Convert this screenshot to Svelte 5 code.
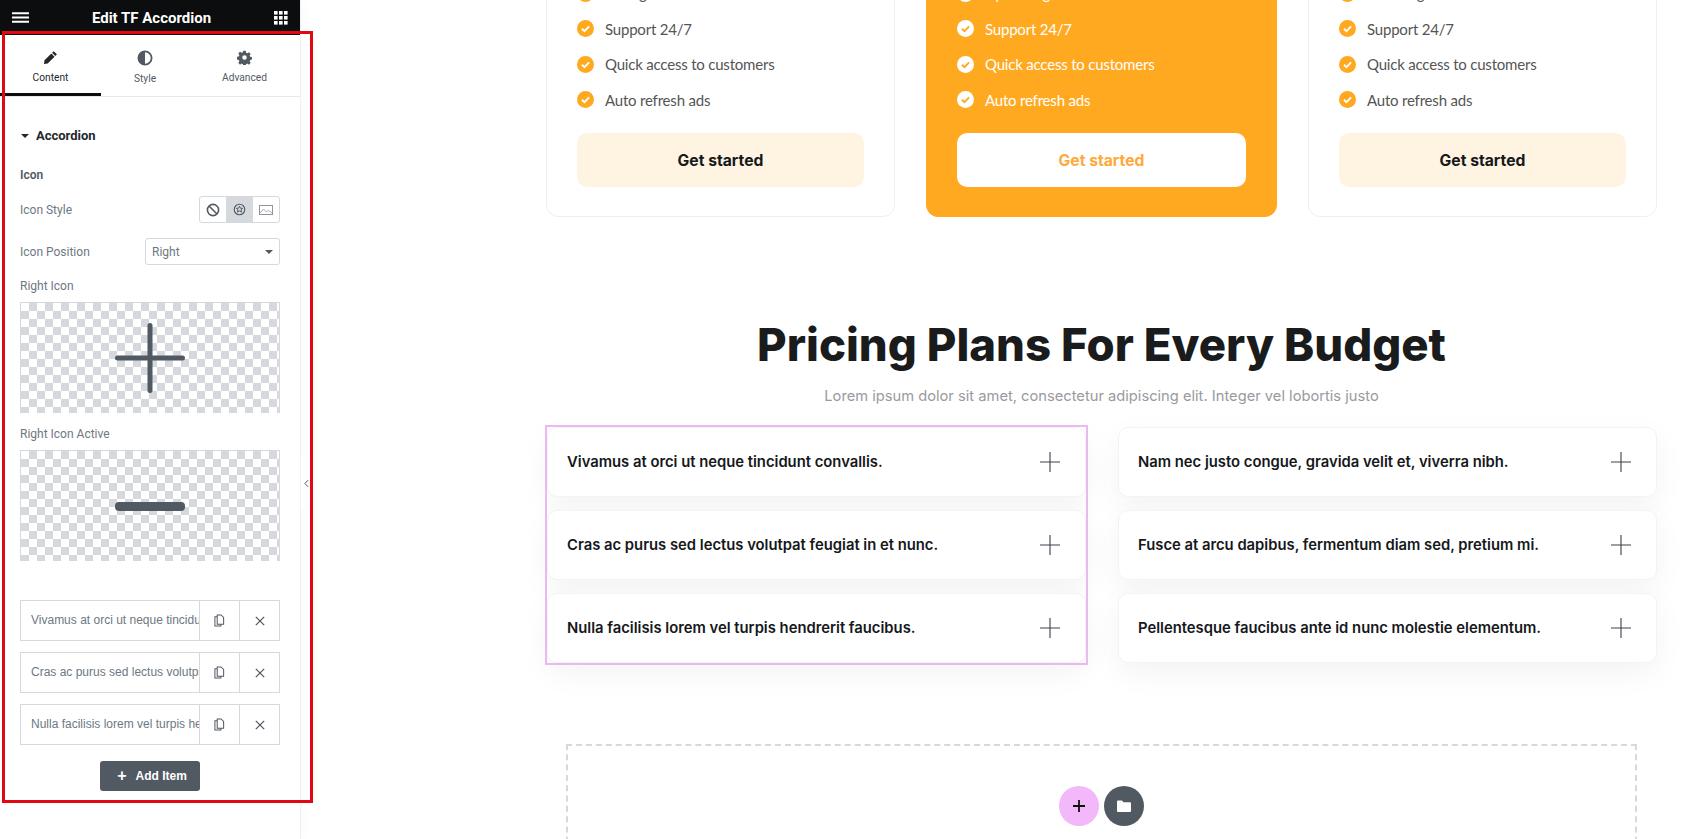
<script lang="ts">
  const plans = [
    { first: 'Listing', featured: false },
    { first: 'Uploading', featured: true },
    { first: 'Branding', featured: false }
  ];
  const features = ['Support 24/7', 'Quick access to customers', 'Auto refresh ads'];
  const leftItems = [
    'Vivamus at orci ut neque tincidunt convallis.',
    'Cras ac purus sed lectus volutpat feugiat in et nunc.',
    'Nulla facilisis lorem vel turpis hendrerit faucibus.'
  ];
  const rightItems = [
    'Nam nec justo congue, gravida velit et, viverra nibh.',
    'Fusce at arcu dapibus, fermentum diam sed, pretium mi.',
    'Pellentesque faucibus ante id nunc molestie elementum.'
  ];
</script>

<div class="page">
  <aside class="panel">
    <header class="panel-head">
      <svg class="burger" viewBox="0 0 16 10" width="17" height="11"><path d="M0 1h16M0 5h16M0 9h16" stroke="#fff" stroke-width="1.8" /></svg>
      <span class="panel-title">Edit TF Accordion</span>
      <svg class="apps" viewBox="0 0 14 14" width="14" height="14" fill="#fff">
        {#each [0, 5, 10] as y}
          {#each [0, 5, 10] as x}
            <rect {x} {y} width="3.6" height="3.6" />
          {/each}
        {/each}
      </svg>
    </header>

    <nav class="tabs">
      <div class="tab active">
        <svg viewBox="0 0 16 16" width="15" height="15"><path d="M11.4 1.2l3.4 3.4-1.7 1.7-3.4-3.4zM8.9 3.7l3.4 3.4-7.3 7.3-4 .6.6-4z" fill="#23282d" /></svg>
        <span>Content</span>
      </div>
      <div class="tab">
        <svg viewBox="0 0 16 16" width="16" height="16"><circle cx="8" cy="8" r="6.6" fill="none" stroke="#515962" stroke-width="1.8" /><path d="M8 1.4a6.6 6.6 0 0 0 0 13.2z" fill="#515962" /></svg>
        <span>Style</span>
      </div>
      <div class="tab">
        <svg viewBox="0 0 16 16" width="15" height="15"><path fill="#515962" fill-rule="evenodd" d="M6.7 1h2.6l.4 2 1.3.6 1.8-1.1 1.8 1.9-1.1 1.7.6 1.4 2 .4v2.5l-2 .4-.6 1.4 1.1 1.7-1.8 1.9-1.8-1.1-1.3.6-.4 2H6.7l-.4-2-1.3-.6-1.8 1.1-1.8-1.9 1.1-1.7-.6-1.4-2-.4V7.5l2-.4.6-1.4-1.1-1.7 1.8-1.9 1.8 1.1 1.3-.6zM8 5.8a2.4 2.4 0 1 0 0 4.8 2.4 2.4 0 0 0 0-4.8z" transform="translate(0 -.2)" /></svg>
        <span>Advanced</span>
      </div>
    </nav>

    <div class="controls">
      <div class="section-title"><i class="caret-dark"></i>Accordion</div>
      <div class="group-title">Icon</div>

      <div class="control-row first">
        <span>Icon Style</span>
        <div class="choices">
          <div class="choice">
            <svg viewBox="0 0 14 14" width="14" height="14"><circle cx="7" cy="7" r="5.6" fill="none" stroke="#515962" stroke-width="1.6" /><path d="M3 3l8 8" stroke="#515962" stroke-width="1.6" /></svg>
          </div>
          <div class="choice on">
            <svg viewBox="0 0 14 14" width="13" height="13"><circle cx="7" cy="7" r="5.7" fill="none" stroke="#515962" stroke-width="1.2" /><path d="M7 3.4l1 2.2 2.4.2-1.8 1.6.6 2.4L7 8.5 4.8 9.8l.6-2.4-1.8-1.6L6 5.6z" fill="none" stroke="#515962" /></svg>
          </div>
          <div class="choice">
            <svg viewBox="0 0 14 12" width="14" height="12"><rect x=".5" y="1.5" width="13" height="9" fill="none" stroke="#8f959c" /><path d="M1 9l3.5-4 3 3 2-1.6L13 9" fill="none" stroke="#8f959c" stroke-width=".8" /></svg>
          </div>
        </div>
      </div>

      <div class="control-row second">
        <span>Icon Position</span>
        <div class="select">Right<i class="caret-gray"></i></div>
      </div>

      <div class="media-label">Right Icon</div>
      <div class="media">
        <svg viewBox="0 0 70 70" width="70" height="70"><path d="M2.5 35h65M35 2.5v65" stroke="#515962" stroke-width="5" stroke-linecap="round" /></svg>
      </div>

      <div class="media-label">Right Icon Active</div>
      <div class="media">
        <svg viewBox="0 0 70 9" width="70" height="9"><rect width="70" height="9" rx="4" fill="#515962" /></svg>
      </div>

      <div class="repeater">
        {#each leftItems as item}
          <div class="rep-row">
            <div class="rep-title">{item}</div>
            <div class="rep-btn">
              <svg viewBox="0 0 12 14" width="11" height="13" fill="none" stroke="#515962" stroke-width="1.1"><path d="M3.5 3H1v10h6.5v-2M3.5 1h4.2L10.5 3.600V11h-7z" /></svg>
            </div>
            <div class="rep-btn">
              <svg viewBox="0 0 12 12" width="10" height="10"><path d="M1 1l10 10M11 1L1 11" stroke="#515962" stroke-width="1.5" /></svg>
            </div>
          </div>
        {/each}
      </div>

      <div class="add-item"><span class="add-plus">+</span>Add Item</div>
    </div>
  </aside>

  <div class="collapse-tab">
    <svg viewBox="0 0 6 10" width="5" height="9"><path d="M5 1L1 5l4 4" fill="none" stroke="#515962" stroke-width="1.2" /></svg>
  </div>
  <div class="red-frame"></div>

  <main class="canvas">
    <section class="plans">
      {#each plans as plan}
        <article class="plan" class:featured={plan.featured}>
          <ul>
            {#each [plan.first, ...features] as text}
              <li>
                <svg viewBox="0 0 18 18" width="17" height="17">
                  <circle cx="9" cy="9" r="9" class="disc" />
                  <path d="M5.2 9.3l2.7 2.6 4.900-5.200" fill="none" class="tick" stroke-width="2" />
                </svg>
                {text}
              </li>
            {/each}
          </ul>
          <div class="get-started">Get started</div>
        </article>
      {/each}
    </section>

    <section class="heading">
      <h2>Pricing Plans For Every Budget</h2>
      <p>Lorem ipsum dolor sit amet, consectetur adipiscing elit. Integer vel lobortis justo</p>
    </section>

    <section class="faq">
      <div class="faq-col selected">
        {#each leftItems as item}
          <div class="faq-item">
            <span>{item}</span>
            <svg viewBox="0 0 20 20" width="20" height="20"><path d="M0 10h20M10 0v20" stroke="#3a4148" stroke-width="1.1" /></svg>
          </div>
        {/each}
      </div>
      <div class="faq-col">
        {#each rightItems as item}
          <div class="faq-item">
            <span>{item}</span>
            <svg viewBox="0 0 20 20" width="20" height="20"><path d="M0 10h20M10 0v20" stroke="#3a4148" stroke-width="1.1" /></svg>
          </div>
        {/each}
      </div>
    </section>

    <section class="dropzone">
      <div class="round pink">
        <svg viewBox="0 0 12 12" width="12" height="12"><path d="M6 0v12M0 6h12" stroke="#111" stroke-width="1.8" /></svg>
      </div>
      <div class="round slate">
        <svg viewBox="0 0 14 12" width="14" height="12"><path d="M0 1.5A1 1 0 0 1 1 .5h4l1.5 1.700H13a1 1 0 0 1 1 1V11a1 1 0 0 1-1 1H1a1 1 0 0 1-1-1z" fill="#fff" /></svg>
      </div>
    </section>
  </main>
</div>

<style>
  :global(body) {
    margin: 0;
    background: #fff;
  }

  .page {
    position: relative;
    display: flex;
    height: 839px;
    overflow: hidden;
    font-family: Roboto, "Liberation Sans", sans-serif;
  }

  /* side panel */
  .panel {
    width: 300px;
    flex: none;
    background: #fff;
    box-shadow: 1px 0 0 #f1f2f3, 4px 0 8px rgba(0, 0, 0, 0.02);
    box-sizing: border-box;
    color: #6d7882;
  }

  .panel-head {
    height: 35px;
    background: #0c0d0e;
    display: flex;
    align-items: center;
    justify-content: space-between;
    padding: 0 12px;
  }

  .panel-title {
    color: #fff;
    font-weight: 700;
    font-size: 15px;
  }

  .tabs {
    display: flex;
    height: 61px;
    border-bottom: 1px solid #e6e8ea;
    color: #515962;
  }

  .tab {
    width: 88px;
    display: flex;
    flex-direction: column;
    align-items: center;
    padding-top: 15px;
    box-sizing: border-box;
    font-size: 10.2px;
    gap: 7px;
  }

  .tab:last-child {
    width: 111px;
  }

  .tab.active {
    width: 101px;
    color: #23282d;
    border-bottom: 3px solid #0c0d0e;
    height: 61px;
  }

  .controls {
    padding: 0 20px;
  }

  .section-title {
    margin-top: 31px;
    display: flex;
    align-items: center;
    font-weight: 700;
    font-size: 13px;
    color: #23282d;
    line-height: 16px;
  }

  .caret-dark {
    width: 0;
    height: 0;
    border: 4px solid transparent;
    border-top: 4px solid #23282d;
    border-bottom: 0;
    margin: 0 7px 0 1px;
  }

  .group-title {
    margin-top: 23px;
    font-weight: 600;
    font-size: 12px;
    line-height: 16px;
    color: #515962;
  }

  .control-row {
    display: flex;
    align-items: center;
    justify-content: space-between;
    font-size: 12px;
    height: 27px;
  }

  .control-row.first {
    margin-top: 13px;
  }

  .control-row.second {
    margin-top: 15px;
  }

  .choices {
    display: flex;
    width: 81px;
    height: 27px;
    box-sizing: border-box;
    border: 1px solid #d5d8dc;
    border-radius: 3px;
    overflow: hidden;
  }

  .choice {
    flex: 1;
    display: flex;
    align-items: center;
    justify-content: center;
  }

  .choice.on {
    background: #d5d8dc;
  }

  .select {
    width: 135px;
    height: 27px;
    box-sizing: border-box;
    border: 1px solid #d5d8dc;
    border-radius: 3px;
    display: flex;
    align-items: center;
    justify-content: space-between;
    padding: 0 6px;
    font-size: 12px;
  }

  .caret-gray {
    width: 0;
    height: 0;
    border: 4px solid transparent;
    border-top: 4px solid #515962;
    border-bottom: 0;
  }

  .media-label {
    margin-top: 13px;
    font-size: 12px;
    line-height: 16px;
  }

  .media {
    margin-top: 8px;
    height: 111px;
    box-sizing: border-box;
    border: 1px solid #d5d8dc;
    border-bottom: 0;
    display: flex;
    align-items: center;
    justify-content: center;
    background-color: #fff;
    background-image: conic-gradient(#d5d8dc 25%, #fff 0 50%, #d5d8dc 0 75%, #fff 0);
    background-size: 16px 16px;
  }

  .repeater {
    margin-top: 39px;
    display: flex;
    flex-direction: column;
    gap: 11px;
  }

  .rep-row {
    display: flex;
    height: 41px;
    box-sizing: border-box;
    border: 1px solid #d5d8dc;
    font-family: "Liberation Sans", Arial, sans-serif;
    font-size: 12px;
  }

  .rep-title {
    width: 178px;
    flex: none;
    padding-left: 10px;
    box-sizing: border-box;
    line-height: 39px;
    white-space: nowrap;
    overflow: hidden;
  }

  .rep-btn {
    flex: 1;
    border-left: 1px solid #d5d8dc;
    display: flex;
    align-items: center;
    justify-content: center;
  }

  .add-item {
    width: 100px;
    height: 30px;
    margin: 16px auto 0;
    padding-left: 4px;
    box-sizing: border-box;
    background: #515962;
    color: #fff;
    border-radius: 3px;
    font-family: "Liberation Sans", Arial, sans-serif;
    font-size: 12px;
    font-weight: 700;
    display: flex;
    align-items: center;
    justify-content: center;
    gap: 9px;
  }

  .add-plus {
    font-size: 16px;
    line-height: 16px;
  }

  .collapse-tab {
    position: absolute;
    left: 301px;
    top: 458px;
    width: 10px;
    height: 50px;
    background: #fff;
    display: flex;
    align-items: center;
    justify-content: center;
    z-index: 1;
  }

  /* annotation drawn over the screenshot */
  .red-frame {
    position: absolute;
    left: 2px;
    top: 31px;
    width: 305px;
    height: 766px;
    border: 3px solid #e30613;
    z-index: 2;
    pointer-events: none;
  }

  /* page canvas */
  .canvas {
    flex: 1;
    min-width: 0;
    padding: 0 26px 0 246px;
    box-sizing: border-box;
  }

  .plans {
    display: flex;
    gap: 31px;
    margin-top: -34px;
    height: 251px;
  }

  .plan {
    flex: 1;
    box-sizing: border-box;
    border: 1px solid #eeeff0;
    border-radius: 12px;
    padding: 8.5px 30px 0;
    color: #555;
  }

  .plan.featured {
    background: #ffa921;
    border-color: #ffa921;
    color: #fff;
    flex: none;
    width: 351px;
  }

  .plan ul {
    list-style: none;
    margin: 0;
    padding: 0;
  }

  .plan li {
    display: flex;
    align-items: center;
    gap: 11px;
    height: 35.5px;
    font-family: Lato, "Open Sans", sans-serif;
    font-size: 15px;
    letter-spacing: -0.2px;
  }

  .disc {
    fill: #ffa921;
  }

  .tick {
    stroke: #fff;
  }

  .featured .disc {
    fill: #fff;
  }

  .featured .tick {
    stroke: #ffa921;
  }

  .get-started {
    margin-top: 15.5px;
    height: 54px;
    border-radius: 10px;
    background: #fff4e2;
    color: #16181a;
    font-family: Inter, sans-serif;
    font-weight: 700;
    font-size: 15.7px;
    display: flex;
    align-items: center;
    justify-content: center;
  }

  .featured .get-started {
    background: #fff;
    color: #ffa93a;
  }

  .heading {
    text-align: center;
    margin-top: 100px;
  }

  .heading h2 {
    margin: 0;
    font-family: Inter, sans-serif;
    font-weight: 800;
    font-size: 45.5px;
    line-height: 56px;
    color: #1a1b1d;
  }

  .heading p {
    margin: 11px 0 0;
    font-family: Inter, sans-serif;
    font-size: 14.7px;
    line-height: 24px;
    color: #999a9e;
  }

  .faq {
    display: flex;
    justify-content: space-between;
    margin: 19px 0 0 1px;
  }

  .faq-col {
    width: 539px;
    display: flex;
    flex-direction: column;
    gap: 13px;
  }

  .faq-col.selected {
    outline: 2px solid #edb7f4;
  }

  .faq-item {
    height: 70px;
    box-sizing: border-box;
    border: 1px solid #f3f3f4;
    border-radius: 10px;
    background: #fff;
    box-shadow: 0 10px 30px rgba(0, 0, 0, 0.05);
    display: flex;
    align-items: center;
    justify-content: space-between;
    padding: 0 25px 0 19px;
    font-family: Inter, sans-serif;
    font-weight: 600;
    font-size: 14.8px;
    color: #16181a;
  }

  .dropzone {
    margin: 81px 20px 0;
    height: 140px;
    box-sizing: border-box;
    border: 2px dashed #d5d8dc;
    display: flex;
    justify-content: center;
    gap: 5px;
    padding-top: 40px;
  }

  .round {
    width: 40px;
    height: 40px;
    border-radius: 50%;
    display: flex;
    align-items: center;
    justify-content: center;
  }

  .pink {
    background: #f2b8f9;
  }

  .slate {
    background: #515962;
  }
</style>
